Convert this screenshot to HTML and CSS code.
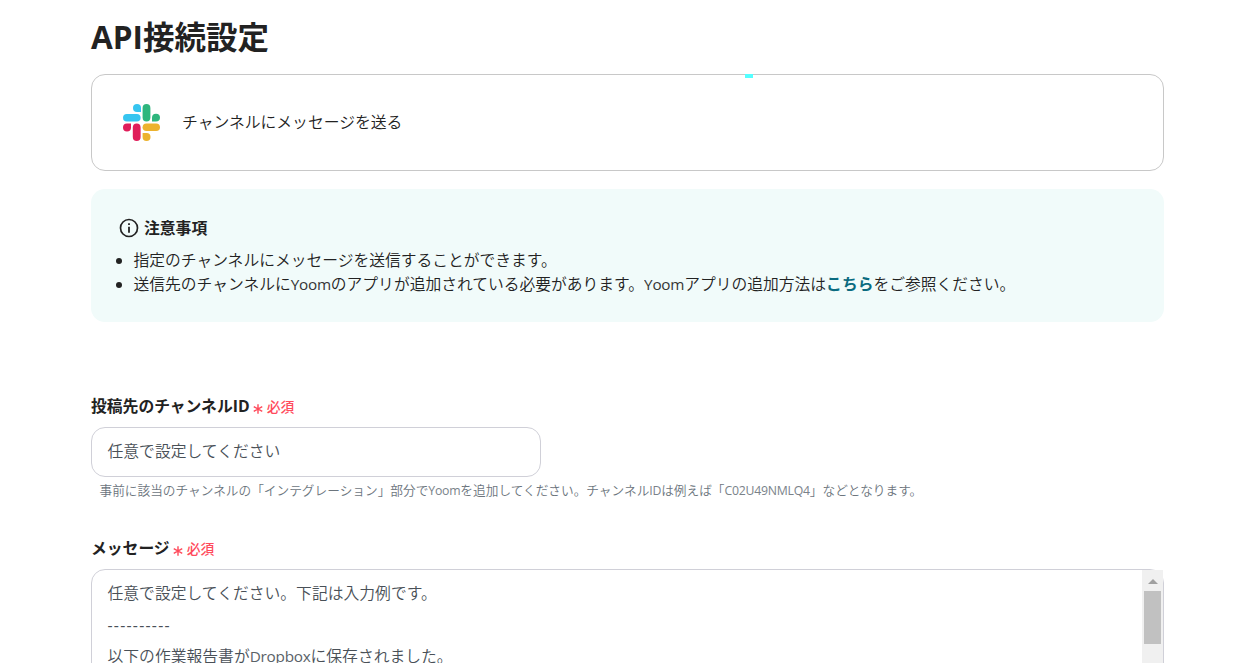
FILE: index.html
```html
<!DOCTYPE html>
<html lang="ja">
<head>
<meta charset="utf-8">
<title>API接続設定</title>
<link rel="stylesheet" href="styles.css">
</head>
<body>
<main class="page">
  <h1 class="title">API接続設定</h1>
  <section class="app-card">
    <svg class="app-logo" viewBox="0 0 37 37" aria-hidden="true">
      <path fill="#36c5f0" d="M14 0a4 4 0 0 0 0 8h4V4a4 4 0 0 0-4-4z"/>
      <rect fill="#36c5f0" x="0" y="10" width="17.6" height="7.6" rx="3.8"/>
      <rect fill="#2eb67d" x="19.6" y="0" width="7.8" height="17.5" rx="3.9"/>
      <path fill="#2eb67d" d="M37 13.7a4 4 0 0 0-8 0v3.8h4a4 4 0 0 0 4-3.8z"/>
      <path fill="#e01e5a" d="M0 23.5a4 4 0 0 0 8 0v-4H4a4 4 0 0 0-4 4z"/>
      <rect fill="#e01e5a" x="9.8" y="19.5" width="7.8" height="17.5" rx="3.9"/>
      <rect fill="#ecb22e" x="19.6" y="19.5" width="17.4" height="7.6" rx="3.8"/>
      <path fill="#ecb22e" d="M23.5 37a4 4 0 0 0 0-8h-3.9v4a4 4 0 0 0 3.9 4z"/>
    </svg>
    <span class="app-name">チャンネルにメッセージを送る</span>
    <i class="marker"></i>
  </section>
  <section class="notice">
    <div class="notice-head">
      <svg class="info" viewBox="0 0 20 20" aria-hidden="true">
        <circle cx="10" cy="10" r="8.5" fill="none" stroke="#222" stroke-width="1.7"/>
        <path d="M9.1 5.2h1.8v1.8H9.1zM9.1 8.8h1.8v6H9.1z" fill="#222"/>
      </svg>
      <strong>注意事項</strong>
    </div>
    <ul class="notice-list">
      <li>指定のチャンネルにメッセージを送信することができます。</li>
      <li>送信先のチャンネルに<span class="latin">Yoom</span>のアプリが追加されている必要があります。<span class="latin">Yoom</span>アプリの追加方法は<a class="link">こちら</a>をご参照ください。</li>
    </ul>
  </section>
  <section class="field channel">
    <div class="label"><span>投稿先のチャンネルID</span><svg class="star" viewBox="0 0 12 12"><path d="M6 .4v11.2M.9 3.2l10.2 5.6M.9 8.8l10.2-5.6"/></svg><span class="required">必須</span></div>
    <div class="input">任意で設定してください</div>
    <p class="help">事前に該当のチャンネルの「インテグレーション」部分で<span class="latin">Yoom</span>を追加してください。チャンネル<span class="latin">ID</span>は例えば「<span class="latin">C02U49NMLQ4</span>」などとなります。</p>
  </section>
  <section class="field message">
    <div class="label"><span>メッセージ</span><svg class="star" viewBox="0 0 12 12"><path d="M6 .4v11.2M.9 3.2l10.2 5.6M.9 8.8l10.2-5.6"/></svg><span class="required">必須</span></div>
    <div class="textarea">
      <div class="lines">
        <div>任意で設定してください。下記は入力例です。</div>
        <div class="dashes">----------</div>
        <div>以下の作業報告書が<span class="latin">Dropbox</span>に保存されました。</div>
      </div>
      <div class="scrollbar"><i class="arrow"></i><i class="thumb"></i></div>
    </div>
  </section>
</main>
</body>
</html>
```
FILE: styles.css
```css
* { box-sizing: border-box; }
body {
  margin: 0;
  height: 663px;
  overflow: hidden;
  background: #fff;
  color: #222;
  font-family: "Open Sans", "Noto Sans CJK JP", sans-serif;
  font-size: 15.8px;
  font-weight: 350;
}
.latin { font-weight: 400; font-size: .97em; letter-spacing: -.25px; opacity: .9; }
.page { width: 1073px; margin-left: 91px; }
.title {
  margin: 0;
  height: 74px;
  line-height: 73px;
  font-size: 31.5px;
  font-weight: 700;
}
.app-card {
  position: relative;
  display: flex;
  align-items: center;
  gap: 22px;
  height: 97px;
  padding-left: 31px;
  border: 1px solid #c8c8c8;
  border-radius: 14px;
}
.app-logo { width: 37px; height: 37px; }
.app-name { padding-bottom: 2px; }
.marker {
  position: absolute;
  left: 653px;
  top: -1px;
  width: 8px;
  height: 4px;
  background: #5ff;
}
.notice {
  height: 133px;
  margin-top: 18px;
  padding: 27px 24px 0;
  border-radius: 14px;
  background: #f1fbfa;
}
.notice-head {
  display: flex;
  align-items: center;
  gap: 5px;
  height: 24px;
  padding-left: 4px;
}
.notice-head strong { padding-bottom: 2px; font-weight: 700; }
.info { width: 20px; height: 20px; }
.notice-list {
  margin: 8px 0 0;
  padding-left: 18.5px;
  line-height: 24px;
  font-size: 15.78px;
}
.link { color: #0b6b80; font-weight: 700; }
.label {
  display: flex;
  align-items: center;
  height: 24px;
  padding-bottom: 2px;
  font-weight: 700;
}
.star {
  width: 10px;
  height: 12px;
  margin: 7px 4px 0 3px;
  fill: none;
  stroke: #ff4b5c;
  stroke-width: 1.7;
}
.required { padding-top: 1px; color: #ff4b5c; font-size: 13.8px; font-weight: 500; }
.channel { margin-top: 72px; }
.input {
  width: 450px;
  height: 50px;
  margin-top: 9px;
  padding-left: 15.5px;
  border: 1px solid #d0d0d8;
  border-radius: 14px;
  line-height: 47px;
  color: #495057;
}
.help {
  height: 20px;
  margin: 3px 0 0 8.5px;
  line-height: 20px;
  font-size: 12.68px;
  color: #6c757d;
  white-space: nowrap;
}
.message { margin-top: 36px; }
.textarea {
  display: flex;
  justify-content: space-between;
  height: 120px;
  margin-top: 9px;
  border: 1px solid #d0d0d8;
  border-radius: 14px;
  color: #495057;
}
.lines { padding: 8px 0 0 15.5px; line-height: 31.5px; }
.dashes { font-weight: 400; letter-spacing: 1.25px; }
.scrollbar {
  display: flex;
  flex-direction: column;
  align-items: center;
  width: 21px;
  background: #f0f0f0;
}
.arrow {
  margin-top: 9px;
  border: 5px solid transparent;
  border-top: 0;
  border-bottom: 5px solid #a0a0a0;
}
.thumb { width: 17px; height: 53px; margin-top: 7px; background: #c1c1c1; }
```
